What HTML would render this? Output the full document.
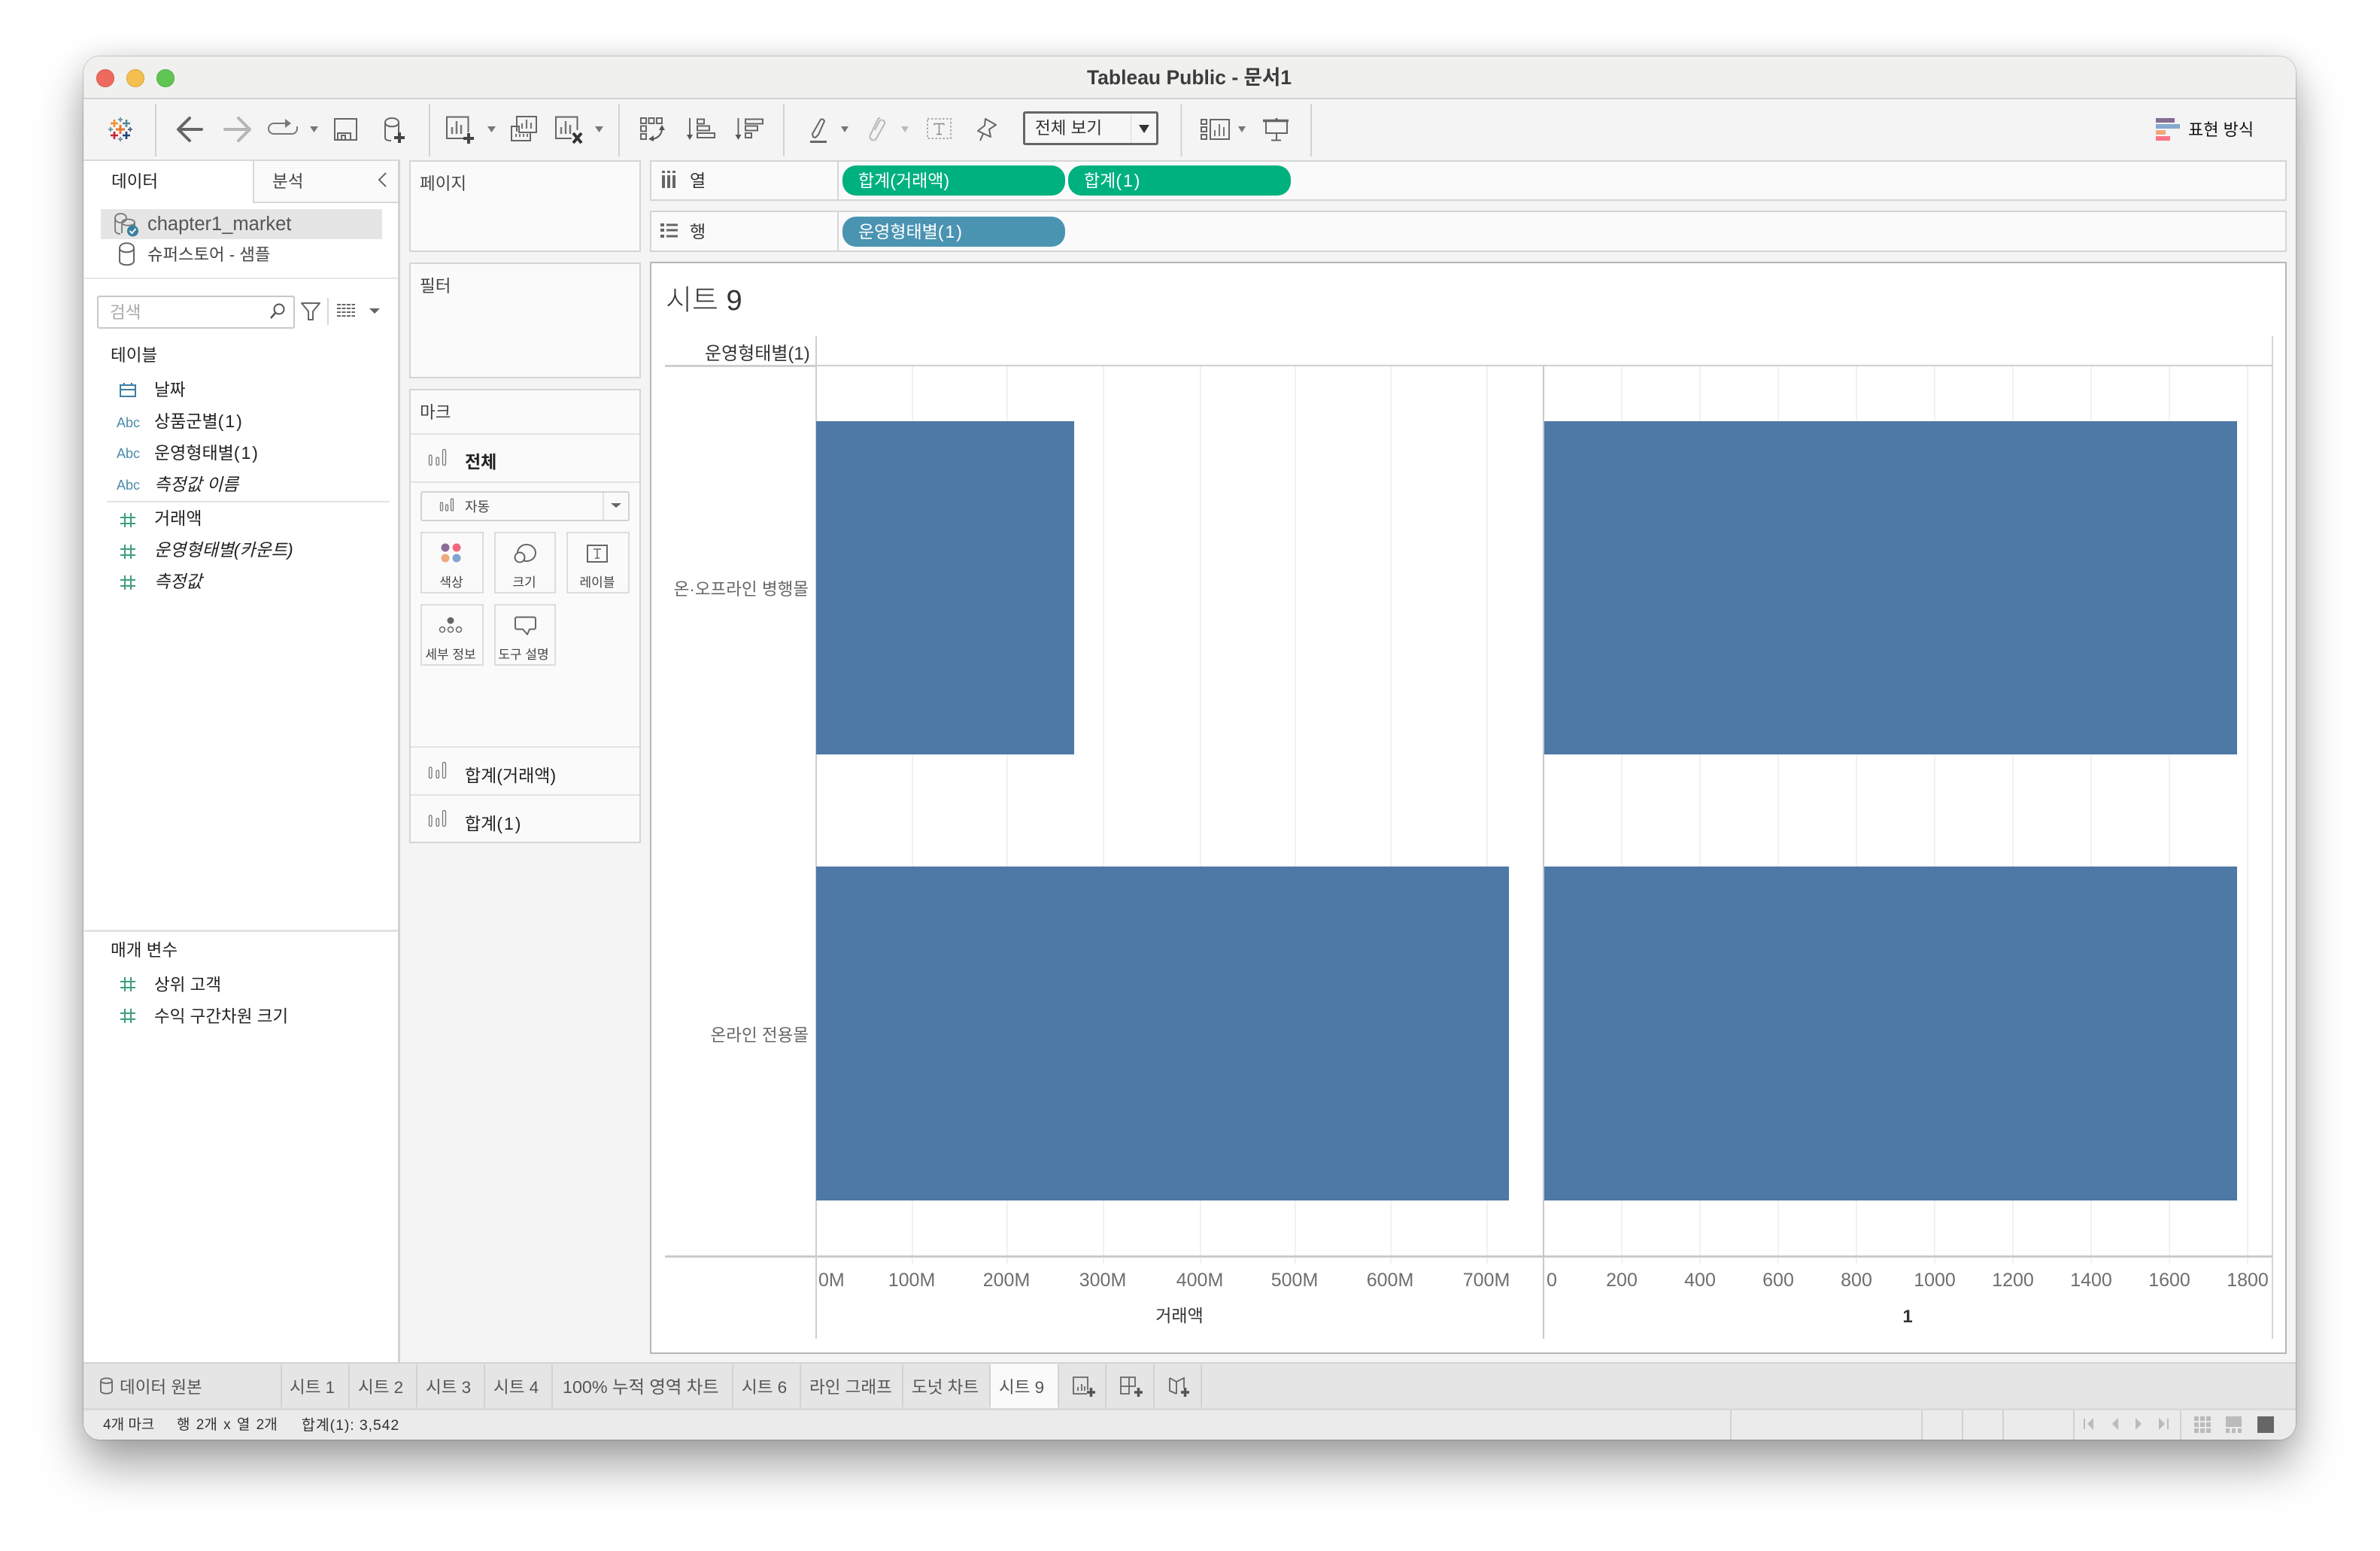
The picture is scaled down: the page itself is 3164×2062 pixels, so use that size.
<!DOCTYPE html>
<html lang="ko"><head><meta charset="utf-8"><title>Tableau Public - 문서1</title>
<style>
html,body{margin:0;padding:0;background:#fff;width:3164px;height:2062px;overflow:hidden}
body{position:relative;font-family:"Liberation Sans","Noto Sans CJK KR",sans-serif;color:#222}
.win{position:absolute;left:111px;top:75px;width:2941px;height:1839px;border-radius:22px;overflow:hidden;background:#f4f4f4}
.shadow{position:absolute;left:111px;top:75px;width:2941px;height:1839px;border-radius:22px;box-shadow:0 34px 62px rgba(0,0,0,.36),0 0 34px rgba(0,0,0,.10),0 0 0 1px rgba(0,0,0,.16)}
.in{position:absolute;left:-111px;top:-75px;width:3164px;height:2062px}
.r{position:absolute;box-sizing:border-box}
.s{border:2px solid #d5d5d5;background:#fafafa}
.t{position:absolute;white-space:nowrap;height:40px;line-height:40px;margin-top:-20px;font-size:22.5px}
.f{font-size:23px}
.p{letter-spacing:2px}
.c{transform:translateX(-50%)}
.e{transform:translateX(-100%)}
.i{font-style:italic}
.ax{font-size:25px;color:#6e6e6e}
.card{position:absolute;box-sizing:border-box;border:2px solid #dcdcdc;background:#fafafa}
.ct{font-size:17px;color:#444}
.ab{font-size:18px;color:#4a8cab}
.tb{color:#555;font-size:22.5px}
.st{font-size:19px;color:#333}
svg{position:absolute;left:0;top:0}
</style></head><body>
<div class="shadow"></div>
<div class="win"><div class="in">
<!-- title + toolbar -->
<div class="r" style="left:111px;top:75px;width:2941px;height:57px;background:#f0f0ee;border-bottom:2px solid #d2d2d2"></div>
<!-- left pane -->
<div class="r" style="left:111px;top:212px;width:421px;height:1600px;background:#fff;border-top:2px solid #d8d8d8;border-right:3px solid #d2d2d2"></div>
<div class="r" style="left:336px;top:214px;width:193px;height:56px;background:#fafafa;border-left:2px solid #d8d8d8;border-bottom:2px solid #d8d8d8"></div>
<div class="r" style="left:134px;top:278px;width:374px;height:40px;background:#e5e5e5"></div>
<div class="r" style="left:112px;top:369px;width:417px;height:2px;background:#e6e6e6"></div>
<div class="r" style="left:129px;top:393px;width:263px;height:44px;border:2px solid #c8c8c8;border-radius:3px;background:#fff"></div>
<div class="r" style="left:142px;top:666px;width:376px;height:2px;background:#e3e3e3"></div>
<div class="r" style="left:112px;top:1236px;width:417px;height:3px;background:#e3e3e3"></div>
<!-- middle shelves -->
<div class="r s" style="left:544px;top:213px;width:308px;height:122px"></div>
<div class="r s" style="left:544px;top:349px;width:308px;height:154px"></div>
<div class="r s" style="left:544px;top:517px;width:308px;height:604px"></div>
<div class="r" style="left:546px;top:576px;width:304px;height:2px;background:#e3e3e3"></div>
<div class="r" style="left:546px;top:640px;width:304px;height:2px;background:#e3e3e3"></div>
<div class="r" style="left:546px;top:992px;width:304px;height:2px;background:#e3e3e3"></div>
<div class="r" style="left:546px;top:1056px;width:304px;height:2px;background:#e3e3e3"></div>
<div class="r" style="left:559px;top:653px;width:278px;height:40px;border:2px solid #d2d2d2;border-radius:3px;background:#fafafa"></div>
<div class="r" style="left:801px;top:655px;width:2px;height:36px;background:#e0e0e0"></div>
<div class="card" style="left:559px;top:707px;width:84px;height:82px"></div>
<div class="card" style="left:657px;top:707px;width:82px;height:82px"></div>
<div class="card" style="left:753px;top:707px;width:84px;height:82px"></div>
<div class="card" style="left:559px;top:803px;width:84px;height:82px"></div>
<div class="card" style="left:657px;top:803px;width:82px;height:82px"></div>
<!-- col/row shelves -->
<div class="r s" style="left:864px;top:213px;width:2176px;height:54px"></div>
<div class="r s" style="left:864px;top:280px;width:2176px;height:55px"></div>
<div class="r" style="left:1113px;top:215px;width:2px;height:50px;background:#d5d5d5"></div>
<div class="r" style="left:1113px;top:282px;width:2px;height:51px;background:#d5d5d5"></div>
<div class="r" style="left:1120px;top:220px;width:296px;height:40px;background:#00b180;border-radius:18px"></div>
<div class="r" style="left:1420px;top:220px;width:296px;height:40px;background:#00b180;border-radius:18px"></div>
<div class="r" style="left:1120px;top:288px;width:296px;height:40px;background:#4a94b2;border-radius:18px"></div>
<!-- viewport -->
<div class="r" style="left:864px;top:348px;width:2176px;height:1452px;background:#fff;border:2px solid #b6b6b6"></div>
<!-- gridlines -->
<div class="r" style="left:1212px;top:487px;width:2px;height:1193px;background:#f1f1f1"></div>
<div class="r" style="left:1338px;top:487px;width:2px;height:1193px;background:#f1f1f1"></div>
<div class="r" style="left:1466px;top:487px;width:2px;height:1193px;background:#f1f1f1"></div>
<div class="r" style="left:1595px;top:487px;width:2px;height:1193px;background:#f1f1f1"></div>
<div class="r" style="left:1721px;top:487px;width:2px;height:1193px;background:#f1f1f1"></div>
<div class="r" style="left:1848px;top:487px;width:2px;height:1193px;background:#f1f1f1"></div>
<div class="r" style="left:1976px;top:487px;width:2px;height:1193px;background:#f1f1f1"></div>
<div class="r" style="left:2155px;top:487px;width:2px;height:1193px;background:#f1f1f1"></div>
<div class="r" style="left:2259px;top:487px;width:2px;height:1193px;background:#f1f1f1"></div>
<div class="r" style="left:2363px;top:487px;width:2px;height:1193px;background:#f1f1f1"></div>
<div class="r" style="left:2467px;top:487px;width:2px;height:1193px;background:#f1f1f1"></div>
<div class="r" style="left:2571px;top:487px;width:2px;height:1193px;background:#f1f1f1"></div>
<div class="r" style="left:2675px;top:487px;width:2px;height:1193px;background:#f1f1f1"></div>
<div class="r" style="left:2779px;top:487px;width:2px;height:1193px;background:#f1f1f1"></div>
<div class="r" style="left:2883px;top:487px;width:2px;height:1193px;background:#f1f1f1"></div>
<div class="r" style="left:2987px;top:487px;width:2px;height:1193px;background:#f1f1f1"></div>
<!-- axis lines -->
<div class="r" style="left:884px;top:485px;width:2137px;height:2px;background:#cfcfcf"></div>
<div class="r" style="left:884px;top:485px;width:201px;height:3px;background:#cfcfcf"></div>
<div class="r" style="left:884px;top:1669px;width:2137px;height:3px;background:#cbcbcb"></div>
<div class="r" style="left:1084px;top:447px;width:2px;height:1333px;background:#cfcfcf"></div>
<div class="r" style="left:2051px;top:486px;width:2px;height:1294px;background:#c8c8c8"></div>
<div class="r" style="left:3020px;top:447px;width:2px;height:1333px;background:#d5d5d5"></div>
<!-- bars -->
<div class="r" style="left:1085px;top:560px;width:343px;height:443px;background:#4e78a6"></div>
<div class="r" style="left:1085px;top:1152px;width:921px;height:444px;background:#4e78a6"></div>
<div class="r" style="left:2053px;top:560px;width:921px;height:443px;background:#4e78a6"></div>
<div class="r" style="left:2053px;top:1152px;width:921px;height:444px;background:#4e78a6"></div>
<!-- bottom tabs -->
<div class="r" style="left:111px;top:1811px;width:2941px;height:64px;background:#e5e5e5;border-top:2px solid #d2d2d2;border-bottom:3px solid #dadada"></div>
<div class="r" style="left:111px;top:1875px;width:2941px;height:39px;background:#ebebeb"></div>
<div class="r" style="left:1316px;top:1813px;width:91px;height:59px;background:#fafafa"></div>
<div class="r" style="left:373px;top:1814px;width:2px;height:57px;background:#d2d2d2"></div>
<div class="r" style="left:463px;top:1814px;width:2px;height:57px;background:#d2d2d2"></div>
<div class="r" style="left:553px;top:1814px;width:2px;height:57px;background:#d2d2d2"></div>
<div class="r" style="left:643px;top:1814px;width:2px;height:57px;background:#d2d2d2"></div>
<div class="r" style="left:733px;top:1814px;width:2px;height:57px;background:#d2d2d2"></div>
<div class="r" style="left:973px;top:1814px;width:2px;height:57px;background:#d2d2d2"></div>
<div class="r" style="left:1063px;top:1814px;width:2px;height:57px;background:#d2d2d2"></div>
<div class="r" style="left:1199px;top:1814px;width:2px;height:57px;background:#d2d2d2"></div>
<div class="r" style="left:1315px;top:1814px;width:2px;height:57px;background:#d2d2d2"></div>
<div class="r" style="left:1406px;top:1814px;width:2px;height:57px;background:#d2d2d2"></div>
<div class="r" style="left:1469px;top:1814px;width:2px;height:57px;background:#d2d2d2"></div>
<div class="r" style="left:1533px;top:1814px;width:2px;height:57px;background:#d2d2d2"></div>
<div class="r" style="left:1596px;top:1814px;width:2px;height:57px;background:#d2d2d2"></div>
<div class="r" style="left:2300px;top:1875px;width:2px;height:39px;background:#d2d2d2"></div>
<div class="r" style="left:2554px;top:1875px;width:2px;height:39px;background:#d2d2d2"></div>
<div class="r" style="left:2608px;top:1875px;width:2px;height:39px;background:#d2d2d2"></div>
<div class="r" style="left:2662px;top:1875px;width:2px;height:39px;background:#d2d2d2"></div>
<div class="r" style="left:2756px;top:1875px;width:2px;height:39px;background:#d2d2d2"></div>
<div class="r" style="left:2898px;top:1875px;width:2px;height:39px;background:#d2d2d2"></div>
<!-- dropdown box -->
<div class="r" style="left:1360px;top:148px;width:180px;height:45px;border:3px solid #666;border-radius:3px;background:#f6f6f6"></div>
<div class="r" style="left:1503px;top:151px;width:1px;height:39px;background:#d6d6d6"></div>

<!-- ICONS -->
<svg width="3164" height="2062" viewBox="0 0 3164 2062" fill="none">
<!-- traffic -->
<circle cx="140" cy="104" r="11.5" fill="#ee6a5f" stroke="#d8564c" stroke-width="1"/>
<circle cx="180" cy="104" r="11.5" fill="#f5bf4f" stroke="#dca53d" stroke-width="1"/>
<circle cx="220" cy="104" r="11.5" fill="#61c554" stroke="#50ad44" stroke-width="1"/>
<!-- toolbar seps -->
<path d="M207 138V208M571 138V208M823 138V208M1042 138V208M1570.500 138V208M1743 138V208" stroke="#d2d2d2" stroke-width="2"/>
<!-- logo -->
<path d="M154 172h12M160 166v12" stroke="#e8762d" stroke-width="3"/>
<path d="M147 164h10M152 159v10" stroke="#f28e2b" stroke-width="2.600"/>
<path d="M163 164h10M168 159v10" stroke="#59879b" stroke-width="2.600"/>
<path d="M147 180h10M152 175v10" stroke="#c72035" stroke-width="2.600"/>
<path d="M163 180h10M168 175v10" stroke="#1f447e" stroke-width="2.600"/>
<path d="M157 159h6M160 156v6M144 172h6M147 169v6" stroke="#7099a6" stroke-width="2"/>
<path d="M170 172h6M173 169v6" stroke="#5b6591" stroke-width="2"/>
<path d="M157 185h6M160 182v6" stroke="#7e8fb0" stroke-width="2"/>
<!-- back/forward -->
<path d="M268 172H238M252 157L237 172L252 187" stroke="#666" stroke-width="4" stroke-linecap="round" stroke-linejoin="round"/>
<path d="M299 172H330M317 157L332 172L317 187" stroke="#b5b5b5" stroke-width="4" stroke-linecap="round" stroke-linejoin="round"/>
<!-- redo -->
<path d="M384 164H364a7 7 0 0 0 0 14H388a7 7 0 0 0 7-7V168" stroke="#777" stroke-width="2"/>
<path d="M378 158l8 6-8 6z" fill="#777" transform="translate(1 0)"/>
<path d="M412 168h11l-5.500 8z" fill="#777"/>
<!-- save -->
<path d="M445 158h29v28h-29zM449 186V177h17v9M454 186v-6h5v6" stroke="#666" stroke-width="2"/>
<!-- add data -->
<path d="M512 163c0-8 18-8 18 0v14M512 163c0 7 18 7 18 0M512 163v20c0 3 3 4 8 4" stroke="#666" stroke-width="2"/>
<path d="M524 183h14M531 176v14" stroke="#444" stroke-width="4"/>
<!-- new sheet -->
<path d="M618 184H594V155.500h28.500V176" stroke="#666" stroke-width="2"/>
<path d="M601 178v-9M607 178v-17M613 178v-12" stroke="#777" stroke-width="2.500"/>
<path d="M616 184h14M623 177v14" stroke="#444" stroke-width="4"/>
<path d="M648 168h11l-5.500 8z" fill="#777"/>
<!-- dup -->
<path d="M687 175V155h26v21h-7" stroke="#666" stroke-width="2"/>
<path d="M694 171v-7M700 171v-12M706 171v-8" stroke="#777" stroke-width="2.200"/>
<path d="M680 187v-19h10v8h15v11z" stroke="#666" stroke-width="2"/>
<path d="M686 182v-4M691 182v-4M696 182v-4M701 182v-4" stroke="#777" stroke-width="2"/>
<!-- clear -->
<path d="M760 184H739V155.500h28.500V173" stroke="#666" stroke-width="2"/>
<path d="M746 178v-9M752 178v-17M758 178v-12" stroke="#777" stroke-width="2.500"/>
<path d="M762 177l11 13M773 177l-11 13" stroke="#333" stroke-width="4"/>
<path d="M791 168h11l-5.500 8z" fill="#777"/>
<!-- swap -->
<path d="M852 157h7v7h-7zM862.500 157h7v7h-7zM873 157h7v7h-7zM852 167.500h7v7h-7zM852 178h7v7h-7z" stroke="#666" stroke-width="2"/>
<path d="M880 172Q879 182 868 185" stroke="#555" stroke-width="2"/>
<path d="M876 173l4-7 4 7z" fill="#555"/>
<path d="M869 180l-7 5 7 3z" fill="#555"/>
<!-- sort -->
<path d="M917 157v24" stroke="#666" stroke-width="2"/><path d="M913 179h8l-4 7z" fill="#555"/>
<path d="M927 158.500h9v6h-9zM927 167.500h16v6h-16zM927 177h23v6h-23z" stroke="#666" stroke-width="2"/>
<path d="M981.500 157v24" stroke="#666" stroke-width="2"/><path d="M977.500 179h8l-4 7z" fill="#555"/>
<path d="M991 158.500h23v6h-23zM991 167.500h16v6h-16zM991 177h8v6h-8z" stroke="#666" stroke-width="2"/>
<!-- pen -->
<path d="M1091 159q3-2 5 2l-8 18-4 4-3-1-1-4z" stroke="#666" stroke-width="2"/>
<path d="M1077 188.500h22" stroke="#666" stroke-width="3"/>
<path d="M1118 168h10l-5 8z" fill="#777"/>
<!-- clip -->
<path d="M1163 173l6-12a4 4 0 0 1 7 3.500l-11 19.500a4.500 4.500 0 0 1-8-4.500l10-21a6 6 0 0 1 3-2" stroke="#b8b8b8" stroke-width="2"/>
<path d="M1198 168h10l-5 8z" fill="#bbb"/>
<!-- T -->
<rect x="1233" y="158" width="31" height="26" stroke="#aaa" stroke-width="2" stroke-dasharray="2.500 2.500"/>
<path d="M1242 164.500h13M1248.500 164.500v14M1245 178.500h7M1242 164.500v2M1255 164.500v2" stroke="#888" stroke-width="1.500"/>
<!-- pin -->
<path d="M1310 158L1324 166L1315 172L1317 182L1300 174L1309 167Z" stroke="#666" stroke-width="2" stroke-linejoin="round"/>
<path d="M1307 178L1303 187" stroke="#666" stroke-width="2"/>
<!-- dropdown arrow -->
<path d="M1514 166h14l-7 11z" fill="#333"/>
<!-- fit icon -->
<path d="M1597 159h7v6h-7zM1597 169h7v6h-7zM1597 179h7v6h-7zM1609 159h25v26h-25z" stroke="#666" stroke-width="2"/>
<path d="M1615 181v-8M1621 181v-16M1627 181v-12" stroke="#777" stroke-width="2"/>
<path d="M1646 168h10l-5 8z" fill="#777"/>
<!-- present -->
<path d="M1679 160.500h34" stroke="#666" stroke-width="3.500"/>
<path d="M1683 162v15h28v-15M1697 177v9M1690 186.500h13" stroke="#666" stroke-width="2"/>
<path d="M1697 157v3" stroke="#666" stroke-width="3"/>
<!-- showme -->
<rect x="2866" y="157" width="25" height="6" fill="#856d93"/>
<rect x="2866" y="165" width="32" height="6" fill="#85a8cf"/>
<rect x="2866" y="173" width="13" height="6" fill="#f2a57c"/>
<rect x="2866" y="181" width="19" height="6" fill="#fa7585"/>
<!-- chevron -->
<path d="M513 230l-9 9 9 9" stroke="#666" stroke-width="2"/>
<!-- source icons -->
<path d="M153 290c0-8 15-8 15 0s-15 8-15 0v16c0 3 3 5 7 5M162 296c0-6 17-6 17 0v7M162 296c0 5 17 5 17 0M162 296v14" stroke="#777" stroke-width="1.800"/>
<circle cx="176.500" cy="307" r="7.500" fill="#37809f"/>
<path d="M172.500 307l3 3 5-6" stroke="#fff" stroke-width="2"/>
<path d="M159 330c0-9 19-9 19 0v17c0 7-19 7-19 0zM159 330c0 7 19 7 19 0" stroke="#666" stroke-width="2"/>
<!-- search/filter -->
<circle cx="371" cy="411" r="6.500" stroke="#555" stroke-width="2"/>
<path d="M366 416l-6 7" stroke="#555" stroke-width="2.500"/>
<path d="M401 403h24l-9 11v11h-6v-11z" stroke="#666" stroke-width="2" stroke-linejoin="round"/>
<path d="M436 396v36" stroke="#d8d8d8" stroke-width="2"/>
<path d="M448 405h24M448 410h24M448 415h24M448 420h24" stroke="#666" stroke-width="2" stroke-dasharray="5 1.500"/>
<path d="M491 410h14l-7 7z" fill="#666"/>
<!-- calendar -->
<path d="M160 512h20v15h-20zM160 518h20M165 509v4M175 509v4" stroke="#3b7ea1" stroke-width="2"/>
<!-- hash -->
<path d="M166 682v19M174 682v19M160 688h20M160 696h20" stroke="#3f9e7c" stroke-width="2"/>
<path d="M166 724v19M174 724v19M160 730h20M160 738h20" stroke="#3f9e7c" stroke-width="2"/>
<path d="M166 765v19M174 765v19M160 771h20M160 779h20" stroke="#3f9e7c" stroke-width="2"/>
<path d="M166 1299v19M174 1299v19M160 1305h20M160 1313h20" stroke="#3f9e7c" stroke-width="2"/>
<path d="M166 1341v19M174 1341v19M160 1347h20M160 1355h20" stroke="#3f9e7c" stroke-width="2"/>
<!-- mark bars -->
<g stroke="#777" stroke-width="1.300">
<rect x="570.500" y="605" width="3.500" height="13.500" rx="1.700"/><rect x="580" y="608" width="3.500" height="10.500" rx="1.700"/><rect x="588.500" y="597.500" width="4" height="21" rx="1.700"/>
<rect x="570.500" y="1020" width="3.500" height="14.500" rx="1.700"/><rect x="580" y="1024" width="3.500" height="10.500" rx="1.700"/><rect x="588.500" y="1013.500" width="4" height="21" rx="1.700"/>
<rect x="570.500" y="1084" width="3.500" height="14.500" rx="1.700"/><rect x="580" y="1088" width="3.500" height="10.500" rx="1.700"/><rect x="588.500" y="1077.500" width="4" height="21" rx="1.700"/>
<rect x="585.500" y="668" width="3" height="11" rx="1.400"/><rect x="592.500" y="671" width="3" height="8" rx="1.400"/><rect x="599.500" y="663" width="3" height="16" rx="1.400"/>
</g>
<path d="M812 669h14l-7 6z" fill="#666"/>
<!-- mark cards -->
<circle cx="592" cy="728" r="5.500" fill="#8a6d9b"/><circle cx="607" cy="728" r="5.500" fill="#f2697f"/>
<circle cx="592" cy="742" r="5.500" fill="#efa97b"/><circle cx="607" cy="742" r="5.500" fill="#80a6d0"/>
<ellipse cx="700" cy="735" rx="12" ry="11" stroke="#666" stroke-width="2"/>
<circle cx="691" cy="741" r="6.500" fill="#fafafa" stroke="#666" stroke-width="2"/>
<rect x="781" y="725" width="26" height="22" stroke="#666" stroke-width="2"/>
<path d="M789 730h10M794 730v12M791 742h6" stroke="#666" stroke-width="1.500"/>
<circle cx="599" cy="825" r="4.500" fill="#666"/>
<circle cx="588" cy="837" r="3.500" stroke="#666" stroke-width="1.500"/><circle cx="599" cy="837" r="3.500" stroke="#666" stroke-width="1.500"/><circle cx="610" cy="837" r="3.500" stroke="#666" stroke-width="1.500"/>
<path d="M687 820.500h23a2 2 0 0 1 2 2v12a2 2 0 0 1-2 2h-6l-3 7-6-7h-8a2 2 0 0 1-2-2v-12a2 2 0 0 1 2-2z" stroke="#666" stroke-width="2" stroke-linejoin="round"/>
<!-- shelf icons -->
<path d="M882 227v3M889 227v3M896 227v3" stroke="#666" stroke-width="4"/>
<path d="M882 233v17M889 233v17M896 233v17" stroke="#666" stroke-width="4"/>
<path d="M878 299h5M878 306h5M878 314h5" stroke="#666" stroke-width="4"/>
<path d="M886 299h15M886 306h15M886 314h15" stroke="#666" stroke-width="3"/>
<!-- tab icons -->
<path d="M134 1836c0-5 15-5 15 0v13c0 5-15 5-15 0zM134 1836c0 4 15 4 15 0" stroke="#666" stroke-width="1.800"/>
<path d="M1445 1853h-18v-22h19v17M1433 1849v-5M1438 1849v-9M1442 1849v-6" stroke="#666" stroke-width="1.800"/>
<path d="M1445 1851h11M1450.500 1845v12" stroke="#555" stroke-width="3.500"/>
<path d="M1490 1831h19v12h-8v10h-11zM1490 1843h11M1501 1831v12" stroke="#666" stroke-width="1.800"/>
<path d="M1508 1851h11M1513.500 1845v12" stroke="#555" stroke-width="3.500"/>
<path d="M1555 1832l9 5 10-5v13M1555 1832v17l9 4M1564 1837v16" stroke="#666" stroke-width="1.800"/>
<path d="M1570 1851h11M1575.500 1845v12" stroke="#555" stroke-width="3.500"/>
<!-- nav -->
<path d="M2771 1886v14" stroke="#bbb" stroke-width="2"/><path d="M2783 1885v16l-8-8z" fill="#bbb"/>
<path d="M2816 1885v16l-8-8z" fill="#bbb"/>
<path d="M2839 1885v16l8-8z" fill="#bbb"/>
<path d="M2870 1885v16l8-8z" fill="#bbb"/><path d="M2882 1886v14" stroke="#bbb" stroke-width="2"/>
<!-- view -->
<g fill="#bbb">
<rect x="2917" y="1883" width="6" height="6"/><rect x="2925" y="1883" width="6" height="6"/><rect x="2933" y="1883" width="6" height="6"/>
<rect x="2917" y="1891" width="6" height="6"/><rect x="2925" y="1891" width="6" height="6"/><rect x="2933" y="1891" width="6" height="6"/>
<rect x="2917" y="1899" width="6" height="6"/><rect x="2925" y="1899" width="6" height="6"/><rect x="2933" y="1899" width="6" height="6"/>
<rect x="2959" y="1883" width="21" height="14"/>
<rect x="2959" y="1899" width="5" height="6"/><rect x="2967" y="1899" width="5" height="6"/><rect x="2975" y="1899" width="5" height="6"/>
</g>
<rect x="3001" y="1883" width="22" height="22" fill="#666"/>
</svg>

<!-- TEXT -->
<div class="t c" style="left:1581px;top:103px;font-size:26.500px;font-weight:bold;color:#3c3c3c">Tableau Public - 문서1</div>
<div class="t" style="left:1376px;top:171px;font-size:22.500px;color:#333">전체 보기</div>
<div class="t" style="left:2909px;top:173px;font-size:22px;color:#111">표현 방식</div>
<div class="t" style="left:148px;top:242px;color:#222">데이터</div>
<div class="t" style="left:362px;top:242px;color:#444">분석</div>
<div class="t" style="left:196px;top:298px;font-size:25.500px;color:#555">chapter1_market</div>
<div class="t" style="left:196px;top:339px;font-size:22.300px;color:#444">슈퍼스토어 - 샘플</div>
<div class="t" style="left:146px;top:416px;color:#aaa">검색</div>
<div class="t" style="left:147px;top:473px;color:#222">테이블</div>
<div class="t" style="left:205px;top:519px;color:#222">날짜</div>
<div class="t ab" style="left:155px;top:562px">Abc</div>
<div class="t f" style="left:205px;top:560px;color:#222">상품군별<span class="p">(1)</span></div>
<div class="t ab" style="left:155px;top:603px">Abc</div>
<div class="t f" style="left:205px;top:602px;color:#222">운영형태별<span class="p">(1)</span></div>
<div class="t ab" style="left:155px;top:645px">Abc</div>
<div class="t i f" style="left:205px;top:644px;color:#222">측정값 이름</div>
<div class="t f" style="left:205px;top:689px;color:#222">거래액</div>
<div class="t i f" style="left:205px;top:731px;color:#222">운영형태별(카운트)</div>
<div class="t i f" style="left:205px;top:773px;color:#222">측정값</div>
<div class="t" style="left:147px;top:1264px;color:#222">매개 변수</div>
<div class="t" style="left:205px;top:1310px;color:#222">상위 고객</div>
<div class="t" style="left:205px;top:1352px;color:#222">수익 구간차원 크기</div>

<div class="t" style="left:558px;top:245px;color:#444">페이지</div>
<div class="t" style="left:558px;top:381px;color:#444">필터</div>
<div class="t" style="left:558px;top:549px;color:#444">마크</div>
<div class="t f" style="left:618px;top:614px;font-weight:bold;color:#222">전체</div>
<div class="t" style="left:618px;top:674px;font-size:18px;color:#444">자동</div>
<div class="t c ct" style="left:600px;top:775px">색상</div>
<div class="t c ct" style="left:697px;top:775px">크기</div>
<div class="t c ct" style="left:794px;top:775px">레이블</div>
<div class="t c ct" style="left:599px;top:871px">세부 정보</div>
<div class="t c ct" style="left:696px;top:871px">도구 설명</div>
<div class="t f" style="left:618px;top:1031px;color:#222">합계(거래액)</div>
<div class="t f" style="left:618px;top:1095px;color:#222">합계<span class="p">(1)</span></div>

<div class="t f" style="left:917px;top:240px;color:#333">열</div>
<div class="t f" style="left:917px;top:308px;color:#333">행</div>
<div class="t f" style="left:1141px;top:240px;color:#fff">합계(거래액)</div>
<div class="t f" style="left:1441px;top:240px;color:#fff">합계<span class="p">(1)</span></div>
<div class="t f" style="left:1141px;top:308px;color:#fff">운영형태별<span class="p">(1)</span></div>

<div class="t" style="left:885px;top:400px;font-size:38px;height:50px;line-height:50px;margin-top:-25px;color:#333;font-weight:300">시트 9</div>
<div class="t" style="left:937px;top:471px;font-size:24px;color:#333">운영형태별(1)</div>
<div class="t e" style="left:1075px;top:784px;color:#666">온·오프라인 병행몰</div>
<div class="t e" style="left:1075px;top:1377px;color:#666">온라인 전용몰</div>

<div class="t ax" style="left:1088px;top:1702px">0M</div>
<div class="t c ax" style="left:1212px;top:1702px">100M</div>
<div class="t c ax" style="left:1338px;top:1702px">200M</div>
<div class="t c ax" style="left:1466px;top:1702px">300M</div>
<div class="t c ax" style="left:1595px;top:1702px">400M</div>
<div class="t c ax" style="left:1721px;top:1702px">500M</div>
<div class="t c ax" style="left:1848px;top:1702px">600M</div>
<div class="t c ax" style="left:1976px;top:1702px">700M</div>
<div class="t ax" style="left:2056px;top:1702px">0</div>
<div class="t c ax" style="left:2156px;top:1702px">200</div>
<div class="t c ax" style="left:2260px;top:1702px">400</div>
<div class="t c ax" style="left:2364px;top:1702px">600</div>
<div class="t c ax" style="left:2468px;top:1702px">800</div>
<div class="t c ax" style="left:2572px;top:1702px">1000</div>
<div class="t c ax" style="left:2676px;top:1702px">1200</div>
<div class="t c ax" style="left:2780px;top:1702px">1400</div>
<div class="t c ax" style="left:2884px;top:1702px">1600</div>
<div class="t c ax" style="left:2988px;top:1702px">1800</div>
<div class="t c f" style="left:1568px;top:1749px;color:#333">거래액</div>
<div class="t c" style="left:2536px;top:1751px;color:#333;font-size:24px;font-weight:bold">1</div>

<div class="t tb" style="left:159px;top:1845px">데이터 원본</div>
<div class="t tb" style="left:385px;top:1845px">시트 1</div>
<div class="t tb" style="left:476px;top:1845px">시트 2</div>
<div class="t tb" style="left:566px;top:1845px">시트 3</div>
<div class="t tb" style="left:656px;top:1845px">시트 4</div>
<div class="t tb" style="left:748px;top:1844px;font-size:23.300px">100% 누적 영역 차트</div>
<div class="t tb" style="left:986px;top:1845px">시트 6</div>
<div class="t tb" style="left:1076px;top:1845px">라인 그래프</div>
<div class="t tb" style="left:1212px;top:1845px">도넛 차트</div>
<div class="t tb" style="left:1328px;top:1845px">시트 9</div>
<div class="t st" style="left:137px;top:1895px">4개 마크</div>
<div class="t st" style="left:235px;top:1895px;word-spacing:3px">행 2개 x 열 2개</div>
<div class="t st" style="left:401px;top:1895px;letter-spacing:.9px;font-size:19.500px">합계(1): 3,542</div>
</div></div>
</body></html>
